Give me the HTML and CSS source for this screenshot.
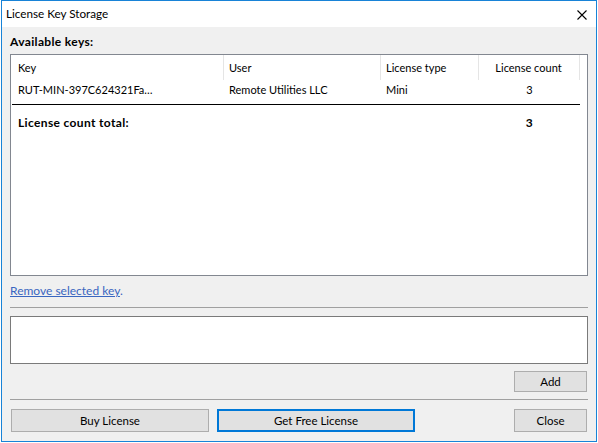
FILE: index.html
```html
<!DOCTYPE html>
<html>
<head>
<meta charset="utf-8">
<link rel="stylesheet" href="styles.css">
</head>
<body>
<div class="window">
  <div class="titlebar">
    <span class="title">License Key Storage</span>
    <svg class="close-x" width="10" height="10" viewBox="0 0 10 10"><path d="M0.5 0.5 L9.5 9.5 M9.5 0.5 L0.5 9.5" stroke="#000" stroke-width="1.1" fill="none"/></svg>
  </div>
  <div class="content">
    <div class="section-label">Available keys:</div>
    <div class="listbox">
      <div class="grid header">
        <div class="cell c-key">Key</div>
        <div class="cell c-user">User</div>
        <div class="cell c-type">License type</div>
        <div class="cell c-count">License count</div>
      </div>
      <div class="grid row">
        <div class="cell c-key">RUT-MIN-397C624321Fa…</div>
        <div class="cell c-user">Remote Utilities LLC</div>
        <div class="cell c-type">Mini</div>
        <div class="cell c-count">3</div>
      </div>
      <div class="total-line"></div>
      <div class="grid row total">
        <div class="cell c-key span2">License count total:</div>
        <div class="cell c-type"></div>
        <div class="cell c-count">3</div>
      </div>
    </div>
    <div class="link-line"><a class="link">Remove selected key</a><span class="period">.</span></div>
    <div class="separator sep1"></div>
    <div class="textbox"></div>
    <div class="add-row"><button class="btn btn-small">Add</button></div>
    <div class="separator sep2"></div>
    <div class="button-row">
      <button class="btn btn-wide">Buy License</button>
      <button class="btn btn-wide btn-focus">Get Free License</button>
      <span class="spacer"></span>
      <button class="btn btn-small">Close</button>
    </div>
  </div>
</div>
</body>
</html>
```

FILE: styles.css
```css
* { box-sizing: border-box; }
html, body {
  margin: 0;
  padding: 0;
  background: #ffffff;
  width: 598px;
  height: 443px;
  overflow: hidden;
  font-family: Lato, "Noto Sans", "Liberation Sans", sans-serif;
  font-size: 11px;
  color: #000;
}
.window {
  margin-left: 1px;
  width: 596px;
  height: 442px;
  border: 1px solid #1883d7;
  display: flex;
  flex-direction: column;
  background: #f0f0f0;
}
.titlebar {
  height: 26px;
  background: #ffffff;
  display: flex;
  align-items: center;
  padding-left: 4px;
  padding-right: 9px;
  flex: none;
}
.title {
  flex: 1;
  font-size: 11.7px;
  line-height: 16px;
  padding-bottom: 2px;
}
.close-x { display: block; margin-top: 1px; }
.content {
  flex: 1;
  padding: 0 8px;
  display: flex;
  flex-direction: column;
}
.section-label {
  height: 27px;
  padding-top: 2px;
  display: flex;
  align-items: center;
  font-weight: bold;
  font-size: 12px;
  letter-spacing: 0.35px;
}
.listbox {
  height: 222px;
  border: 1px solid #828790;
  background: #ffffff;
  flex: none;
}
.grid {
  display: grid;
  grid-template-columns: 213px 157px 98px 101px;
}
.header { height: 25px; }
.header .cell {
  border-right: 1px solid #e5e5e5;
  display: flex;
  align-items: center;
  height: 25px;
}
.row { height: 18px; }
.row .cell { display: flex; align-items: center; height: 18px; }
.cell { white-space: nowrap; }
.c-key { padding-left: 7px; }
.c-user, .c-type { padding-left: 5px; }
.c-count { justify-content: center; }
.header .c-count { justify-content: center; padding-right: 1px; }
.span2 { grid-column: span 2; }
.total-line {
  margin: 6px 0 0 1px;
  width: 568px;
  height: 1px;
  background: #000;
}
.total {
  margin-top: 8px;
  font-weight: bold;
  font-size: 12px;
  letter-spacing: 0.35px;
}
.link-line {
  margin-top: 7px;
  height: 16px;
  line-height: 16px;
  font-size: 12px;
}
.link {
  color: #3a66c0;
  text-decoration: underline;
  cursor: pointer;
}
.period { color: #3a66c0; }
.separator {
  height: 1px;
  background: #a0a0a0;
  flex: none;
}
.sep1 { margin-top: 8px; }
.textbox {
  margin-top: 8px;
  height: 48px;
  border: 1px solid #7a7a7a;
  background: #ffffff;
  flex: none;
}
.add-row {
  margin-top: 7px;
  display: flex;
  justify-content: flex-end;
  padding-right: 1px;
}
.sep2 { margin-top: 7px; }
.btn {
  font-family: inherit;
  font-size: 11.5px;
  color: #000;
  background: #e1e1e1;
  border: 1px solid #adadad;
  padding: 0;
  margin: 0;
  border-radius: 0;
}
.btn-small { width: 73px; height: 21px; }
.button-row {
  margin-top: 9px;
  display: flex;
  gap: 8px;
  padding-left: 1px;
  padding-right: 1px;
}
.btn-wide { width: 198px; height: 23px; }
.button-row .btn-small { height: 23px; }
.btn-focus { border: 2px solid #0078d7; }
.spacer { flex: 1; }
```
